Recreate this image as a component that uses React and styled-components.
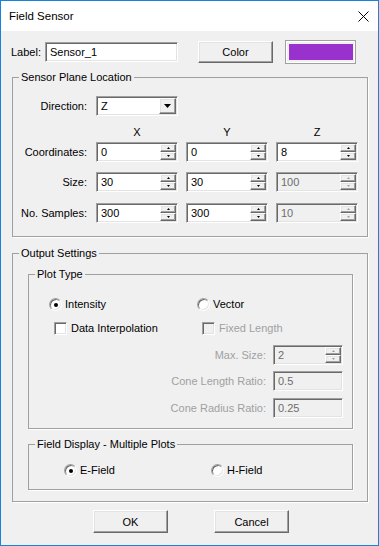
import React from 'react';
import styled, { createGlobalStyle, css } from 'styled-components';

const GlobalStyle = createGlobalStyle`
  html, body { margin: 0; padding: 0; background: #fff; }
  body {
    font-family: "Liberation Sans", Arial, sans-serif;
    font-size: 11px;
    color: #000;
  }
  * { box-sizing: border-box; }
`;

const sunken = css`
  border: 1px solid;
  border-color: #a0a0a0 #fff #fff #a0a0a0;
  box-shadow: inset 1px 1px 0 #696969, inset -1px -1px 0 #e3e3e3;
`;

const raised = css`
  border: 1px solid;
  border-color: #fff #696969 #696969 #fff;
  box-shadow: inset -1px -1px 0 #a0a0a0, inset 1px 1px 0 #e3e3e3;
`;

const Window = styled.div`
  width: 379px;
  height: 546px;
  border: 1px solid #1883d7;
  background: #f0f0f0;
  display: flex;
  flex-direction: column;
`;

const TitleBar = styled.div`
  height: 30px;
  flex: none;
  background: #fff;
  display: flex;
  align-items: center;
  justify-content: space-between;
  padding: 0 9px 0 8px;
  font-size: 11.5px;
`;

const Body = styled.div`
  display: flex;
  flex-direction: column;
  padding: 9px 10px 0 10px;
`;

const TopRow = styled.div`
  display: flex;
  align-items: center;
  height: 24px;
`;

const Text = styled.span`
  color: ${p => (p.$disabled ? '#a0a0a0' : '#000')};
  line-height: 13px;
  white-space: nowrap;
`;

const TextInput = styled.div`
  ${sunken};
  width: ${p => p.$w}px;
  height: 20px;
  background: ${p => (p.$disabled ? '#f0f0f0' : '#fff')};
  color: ${p => (p.$disabled ? '#6d6d6d' : '#000')};
  display: flex;
  align-items: center;
  padding-left: 4px;
  margin-left: ${p => p.$ml || 0}px;
`;

const Button = styled.div`
  ${raised};
  width: 75px;
  height: ${p => p.$h || 22}px;
  background: #f0f0f0;
  display: flex;
  align-items: center;
  justify-content: center;
  margin-left: ${p => p.$ml || 0}px;
`;

const Swatch = styled.div`
  width: 71px;
  height: 24px;
  margin-left: 12px;
  border: 1px solid #a0a0a0;
  box-shadow: inset 1px 1px 0 #fff, inset -1px -1px 0 #fff;
  padding: 3px 2px 3px 3px;
`;

const SwatchFill = styled.div`
  width: 100%;
  height: 100%;
  background: ${p => p.$color};
`;

const Group = styled.fieldset`
  width: ${p => p.$w}px;
  margin: ${p => p.$mt}px 0 0 ${p => p.$ml || 1}px;
  padding: 0 0 ${p => p.$pb}px 0;
  border: 1px solid #a0a0a0;
  box-shadow: 1px 1px 0 #fff;
  min-width: 0;
`;

const Legend = styled.legend`
  margin-left: 6px;
  padding: 0 2px;
  line-height: 13px;
  font-size: 11px;
`;

const LocRow = styled.div`
  display: grid;
  grid-template-columns: 75px 82px 82px 82px;
  column-gap: 8px;
  align-items: center;
  margin-top: ${p => p.$mt}px;
`;

const RowLabel = styled(Text)`
  text-align: right;
  padding-right: 1px;
`;

const AxisHead = styled(Text)`
  text-align: center;
`;

const Field = styled.div`
  ${sunken};
  height: 20px;
  background: ${p => (p.$disabled ? '#f0f0f0' : '#fff')};
  color: ${p => (p.$disabled ? '#6d6d6d' : '#000')};
  display: flex;
  align-items: stretch;
  padding: 1px 1px 1px 4px;
`;

const FieldValue = styled.span`
  flex: 1;
  display: flex;
  align-items: center;
`;

const SpinBox = styled.div`
  width: 16px;
  display: flex;
  flex-direction: column;
`;

const SpinBtn = styled.div`
  ${raised};
  flex: 1;
  background: #f0f0f0;
  display: flex;
  align-items: center;
  justify-content: center;
`;

const DropBtn = styled.div`
  ${raised};
  width: 17px;
  background: #f0f0f0;
  display: flex;
  align-items: center;
  justify-content: center;
`;

const Arrow = ({ up, color = '#000', w = 5, h = 3 }) => (
  <svg width={w} height={h} viewBox={`0 0 ${w} ${h}`}>
    <polygon
      points={up ? `0,${h} ${w},${h} ${w / 2},0` : `0,0 ${w},0 ${w / 2},${h}`}
      fill={color}
    />
  </svg>
);

const SpinField = ({ value, disabled }) => (
  <Field $disabled={disabled}>
    <FieldValue>{value}</FieldValue>
    <SpinBox>
      <SpinBtn><Arrow up w={3} h={2} color={disabled ? '#a0a0a0' : '#000'} /></SpinBtn>
      <SpinBtn><Arrow w={3} h={2} color={disabled ? '#a0a0a0' : '#000'} /></SpinBtn>
    </SpinBox>
  </Field>
);

const Combo = ({ value }) => (
  <Field>
    <FieldValue>{value}</FieldValue>
    <DropBtn><Arrow w={7} h={4} /></DropBtn>
  </Field>
);

const ChoiceRow = styled.div`
  display: grid;
  grid-template-columns: ${p => p.$col}px auto;
  align-items: center;
  padding-left: ${p => p.$pl}px;
  margin-top: ${p => p.$mt}px;
`;

const Choice = styled.div`
  display: flex;
  align-items: center;
  gap: ${p => p.$gap || 3}px;
`;

const RadioDot = styled.span`
  ${sunken};
  width: 13px;
  height: 13px;
  border-radius: 50%;
  background: #fff;
  display: flex;
  align-items: center;
  justify-content: center;
  &::after {
    content: '';
    display: ${p => (p.$checked ? 'block' : 'none')};
    width: 4px;
    height: 4px;
    border-radius: 50%;
    background: #000;
  }
`;

const CheckBox = styled.span`
  ${sunken};
  width: 13px;
  height: 13px;
  background: ${p => (p.$disabled ? '#f0f0f0' : '#fff')};
`;

const RatioRow = styled.div`
  display: grid;
  grid-template-columns: 238px 70px;
  column-gap: 6px;
  align-items: center;
  margin-top: ${p => p.$mt}px;
`;

const Footer = styled.div`
  display: flex;
  margin-top: 8px;
  padding-left: 82px;
`;

const CloseIcon = () => (
  <svg width="11" height="11" viewBox="0 0 11 11">
    <path d="M0.5 0.5 L10.5 10.5 M10.5 0.5 L0.5 10.5" stroke="#000" strokeWidth="1" />
  </svg>
);

const locationRows = [
  { label: 'Coordinates:', values: ['0', '0', '8'], mt: 3, zOff: false },
  { label: 'Size:', values: ['30', '30', '100'], mt: 10, zOff: true },
  { label: 'No. Samples:', values: ['300', '300', '10'], mt: 11, zOff: true },
];

export default function App() {
  return (
    <>
      <GlobalStyle />
      <Window>
        <TitleBar>
          <span>Field Sensor</span>
          <CloseIcon />
        </TitleBar>
        <Body>
          <TopRow>
            <Text>Label:</Text>
            <TextInput $w={133} $ml={4}>Sensor_1</TextInput>
            <Button $ml={20}>Color</Button>
            <Swatch><SwatchFill $color="#9932cc" /></Swatch>
          </TopRow>

          <Group $w={356} $mt={7} $pb={13}>
            <Legend>Sensor Plane Location</Legend>
            <LocRow $mt={12}>
              <RowLabel>Direction:</RowLabel>
              <Combo value="Z" />
            </LocRow>
            <LocRow $mt={10}>
              <span />
              <AxisHead>X</AxisHead>
              <AxisHead>Y</AxisHead>
              <AxisHead>Z</AxisHead>
            </LocRow>
            {locationRows.map(row => (
              <LocRow key={row.label} $mt={row.mt}>
                <RowLabel>{row.label}</RowLabel>
                <SpinField value={row.values[0]} />
                <SpinField value={row.values[1]} />
                <SpinField value={row.values[2]} disabled={row.zOff} />
              </LocRow>
            ))}
          </Group>

          <Group $w={356} $mt={10} $pb={11}>
            <Legend>Output Settings</Legend>
            <Group $w={325} $mt={8} $ml={15} $pb={10}>
              <Legend>Plot Type</Legend>
              <ChoiceRow $col={148} $pl={20} $mt={17}>
                <Choice><RadioDot $checked /><Text>Intensity</Text></Choice>
                <Choice><RadioDot /><Text>Vector</Text></Choice>
              </ChoiceRow>
              <ChoiceRow $col={148} $pl={25} $mt={11}>
                <Choice $gap={4}><CheckBox /><Text>Data Interpolation</Text></Choice>
                <Choice $gap={4}><CheckBox $disabled /><Text $disabled>Fixed Length</Text></Choice>
              </ChoiceRow>
              <RatioRow $mt={10}>
                <RowLabel $disabled>Max. Size:</RowLabel>
                <SpinField value="2" disabled />
              </RatioRow>
              <RatioRow $mt={6}>
                <RowLabel $disabled>Cone Length Ratio:</RowLabel>
                <TextInput $w={70} $disabled>0.5</TextInput>
              </RatioRow>
              <RatioRow $mt={7}>
                <RowLabel $disabled>Cone Radius Ratio:</RowLabel>
                <TextInput $w={70} $disabled>0.25</TextInput>
              </RatioRow>
            </Group>
            <Group $w={325} $mt={9} $ml={15} $pb={12}>
              <Legend>Field Display - Multiple Plots</Legend>
              <ChoiceRow $col={147} $pl={35} $mt={13}>
                <Choice><RadioDot $checked /><Text>E-Field</Text></Choice>
                <Choice><RadioDot /><Text>H-Field</Text></Choice>
              </ChoiceRow>
            </Group>
          </Group>

          <Footer>
            <Button $h={23}>OK</Button>
            <Button $h={23} $ml={46}>Cancel</Button>
          </Footer>
        </Body>
      </Window>
    </>
  );
}
